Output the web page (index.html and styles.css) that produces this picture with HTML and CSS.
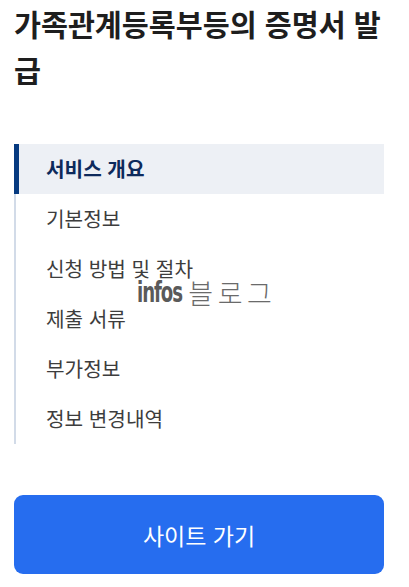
FILE: index.html
```html
<!DOCTYPE html>
<html lang="ko">
<head>
<meta charset="utf-8">
<title>가족관계등록부등의 증명서 발급</title>
<link rel="stylesheet" href="styles.css">
</head>
<body>
<main class="page">
  <h1 class="title">가족관계등록부등의 증명서 발급</h1>
  <nav class="toc">
    <a class="toc-item active" href="#">서비스 개요</a>
    <a class="toc-item" href="#">기본정보</a>
    <a class="toc-item" href="#">신청 방법 및 절차</a>
    <a class="toc-item" href="#">제출 서류</a>
    <a class="toc-item" href="#">부가정보</a>
    <a class="toc-item" href="#">정보 변경내역</a>
  </nav>
  <a class="site-btn" href="#">사이트 가기</a>
</main>
<div class="watermark"><span class="wm-en">infos</span><span class="wm-ko">블로그</span></div>
</body>
</html>
```
FILE: styles.css
```css
* { box-sizing: border-box; }
html, body { margin: 0; padding: 0; background: #fff; }
body {
  font-family: "Noto Sans CJK KR", "Noto Sans", sans-serif;
  color: #333;
}
.page {
  width: 370px;
  margin-left: 14px;
  display: flex;
  flex-direction: column;
}
.title {
  margin: 0;
  font-size: 29.3px;
  line-height: 46px;
  font-weight: 700;
  color: #1e1e1e;
}
.toc {
  margin-top: 52px;
  display: flex;
  flex-direction: column;
  border-left: 2px solid #d2dbe8;
}
.toc-item {
  display: block;
  height: 50px;
  line-height: 50px;
  padding-left: 30px;
  font-size: 20.2px;
  color: #3d3d3d;
  text-decoration: none;
}
.toc-item.active {
  margin-left: -2px;
  border-left: 5px solid #063a80;
  padding-left: 27px;
  background: #edf0f5;
  color: #0d2a5c;
  font-weight: 700;
}
.site-btn {
  margin-top: 51px;
  height: 79px;
  border-radius: 9px;
  background: #266def;
  color: #fff;
  font-size: 23px;
  display: flex;
  align-items: center;
  justify-content: center;
  text-decoration: none;
}
.watermark {
  position: absolute;
  left: 137px;
  top: 281px;
  height: 24px;
  display: flex;
  align-items: center;
  gap: 8px;
  pointer-events: none;
}
.wm-en {
  font-family: "DejaVu Sans Condensed", "Liberation Sans Narrow", sans-serif;
  font-weight: 700;
  font-size: 28px;
  line-height: 24px;
  color: #5a5a5a;
  letter-spacing: -1.5px;
  display: inline-block;
  transform: scaleX(0.72);
  transform-origin: left center;
  margin-right: -19px;
}
.wm-ko {
  font-size: 27px;
  line-height: 24px;
  font-weight: 300;
  color: #6a6a6a;
  letter-spacing: 4.5px;
}
```
